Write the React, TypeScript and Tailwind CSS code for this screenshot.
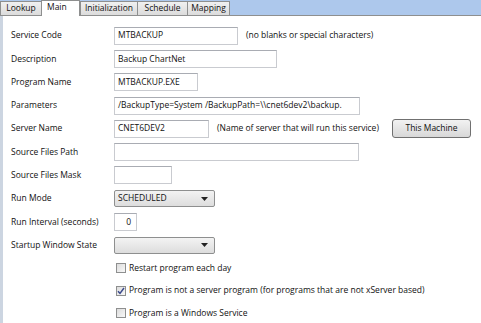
import React from "react";

type Row = {
  label: string;
  field: React.ReactNode;
};

const font = { fontFamily: '"Open Sans", "Noto Sans", sans-serif' };

const TextBox = ({ value = "", width, align = "left" }: { value?: string; width: string; align?: "left" | "right" }) => (
  <div
    className={`${width} h-[18px] border border-[#c9cbd0] border-t-[#a9acb3] bg-white flex items-center px-[3px] overflow-hidden whitespace-nowrap ${
      align === "right" ? "justify-end pr-[5px]" : ""
    }`}
  >
    {value}
  </div>
);

const Select = ({ value = "" }: { value?: string }) => (
  <div className="w-[101px] h-[17px] border border-[#8e8f8f] rounded-[2px] bg-gradient-to-b from-[#f3f3f3] to-[#dddddd] flex items-center justify-between pl-[3px] pr-[6px]">
    <span>{value}</span>
    <svg width="7" height="4" viewBox="0 0 7 4">
      <path d="M0 0h7L3.5 4z" fill="#222" />
    </svg>
  </div>
);

const Check = ({ checked, label }: { checked?: boolean; label: string }) => (
  <div className="flex items-center gap-[3px] pl-[113px]">
    <div className="w-[10px] h-[10px] border border-[#8e8f8f] bg-gradient-to-br from-[#dcdcdc] to-[#f8f8f8] flex items-center justify-center">
      {checked && (
        <svg width="8" height="8" viewBox="0 0 8 8">
          <path d="M1 4.2l2 2.2L7 1" stroke="#3b4a8c" strokeWidth="1.5" fill="none" />
        </svg>
      )}
    </div>
    <span>{label}</span>
  </div>
);

const rows: Row[] = [
  {
    label: "Service Code",
    field: (
      <>
        <TextBox value="MTBACKUP" width="w-[124px]" />
        <span className="ml-[8px]">(no blanks or special characters)</span>
      </>
    ),
  },
  { label: "Description", field: <TextBox value="Backup ChartNet" width="w-[163px]" /> },
  { label: "Program Name", field: <TextBox value="MTBACKUP.EXE" width="w-[84px]" /> },
  {
    label: "Parameters",
    field: <TextBox value="/BackupType=System /BackupPath=\\cnet6dev2\backup." width="w-[246px]" />,
  },
  {
    label: "Server Name",
    field: (
      <>
        <TextBox value="CNET6DEV2" width="w-[95px]" />
        <span className="ml-[8px]">(Name of server that will run this service)</span>
        <button className="ml-auto mr-[10px] w-[79px] h-[19px] border border-[#707070] rounded-[3px] bg-gradient-to-b from-[#f2f2f2] to-[#d8d8d8]">
          This Machine
        </button>
      </>
    ),
  },
  { label: "Source Files Path", field: <TextBox width="w-[245px]" /> },
  { label: "Source Files Mask", field: <TextBox width="w-[58px]" /> },
  { label: "Run Mode", field: <Select value="SCHEDULED" /> },
  { label: "Run Interval (seconds)", field: <TextBox value="0" width="w-[23px]" align="right" /> },
  { label: "Startup Window State", field: <Select /> },
];

const tabs = ["Lookup", "Main", "Initialization", "Schedule", "Mapping"];
const tabWidths = ["w-[41px]", "w-[39px]", "w-[57px]", "w-[50px]", "w-[43px]"];

export default function App() {
  return (
    <div className="w-[481px] h-[323px] bg-white text-[#111] text-[8.5px] overflow-hidden flex flex-col" style={font}>
      <div className="h-[16px] flex items-end bg-[#adc8ec] border-b border-[#8e8f8f] shrink-0">
        {tabs.map((t, i) =>
          t === "Main" ? (
            <div
              key={t}
              className={`${tabWidths[i]} h-[16px] -mb-px bg-white border-x border-t border-[#8e8f8f] flex items-start pl-[5px] pt-0`}
            >
              {t}
            </div>
          ) : (
            <div
              key={t}
              className={`${tabWidths[i]} h-[14px] border-l border-t border-[#8e8f8f] bg-gradient-to-b from-[#f0f0f0] to-[#dcdcdc] flex items-center justify-center ${
                i === 4 ? "border-r" : ""
              }`}
            >
              {t}
            </div>
          ),
        )}
      </div>
      <div className="flex-1 flex flex-col border-l-[3px] border-[#ccd5e1] pt-[8px]">
        {rows.map((r) => (
          <div key={r.label} className="h-[23.3px] flex items-center">
            <div className="w-[111px] pl-[8px] shrink-0">{r.label}</div>
            <div className="flex-1 flex items-center">{r.field}</div>
          </div>
        ))}
        <div className="h-[22.5px] flex items-center">
          <Check label="Restart program each day" />
        </div>
        <div className="h-[22.5px] flex items-center">
          <Check checked label="Program is not a server program (for programs that are not xServer based)" />
        </div>
        <div className="h-[22.5px] flex items-center">
          <Check label="Program is a Windows Service" />
        </div>
      </div>
    </div>
  );
}
